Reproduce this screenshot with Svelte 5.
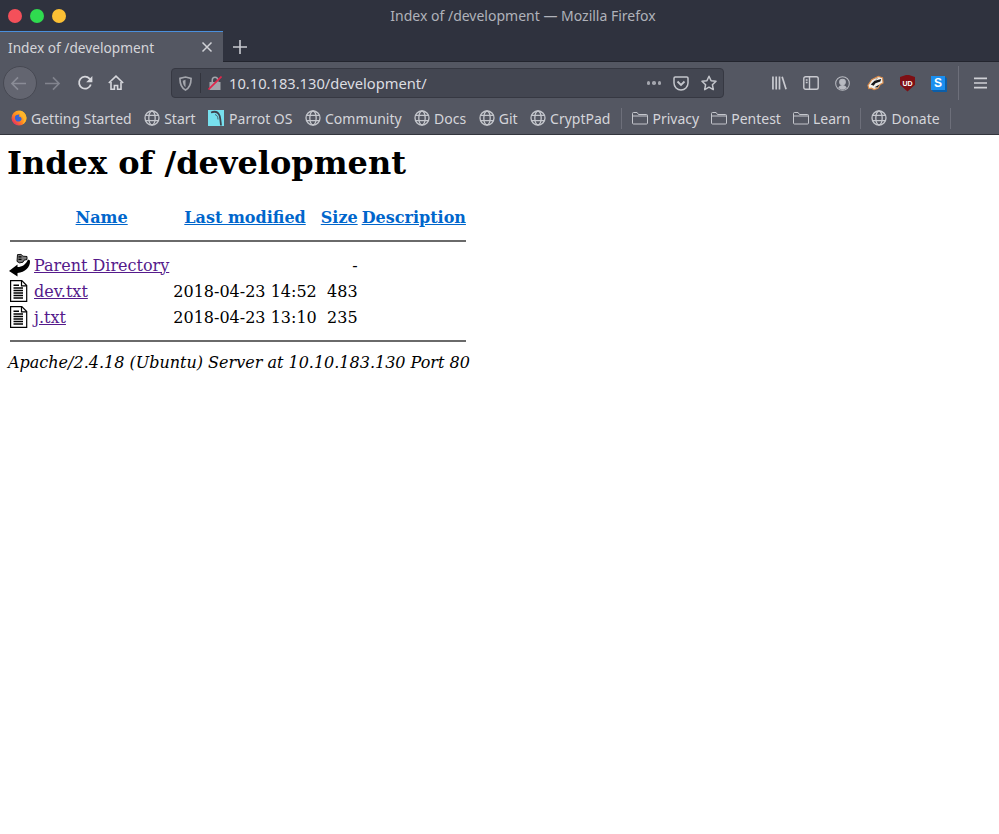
<script>
  const mainBookmarks = [
    { label: 'Start', icon: 'globe' },
    { label: 'Parrot OS', icon: 'parrot' },
    { label: 'Community', icon: 'globe' },
    { label: 'Docs', icon: 'globe' },
    { label: 'Git', icon: 'globe' },
    { label: 'CryptPad', icon: 'globe' }
  ];
  const folders = ['Privacy', 'Pentest', 'Learn'];
  const files = [
    { name: 'dev.txt', date: '2018-04-23 14:52', size: '483' },
    { name: 'j.txt', date: '2018-04-23 13:10', size: '235' }
  ];
</script>

{#snippet globe()}
  <svg class="bm-icon" viewBox="0 0 16 16" fill="none" stroke="#c4c6cc" stroke-width="1.3">
    <circle cx="8" cy="8" r="7" />
    <ellipse cx="8" cy="8" rx="3.2" ry="7" />
    <path d="M1.4 5.4h13.2M1.4 10.6h13.2" />
  </svg>
{/snippet}

{#snippet folder()}
  <svg class="bm-icon" viewBox="0 0 16 16" fill="none" stroke="#c4c6cc" stroke-width="1">
    <path d="M.5 13V3.5a1 1 0 0 1 1-1h3.6l1.4 2h8a1 1 0 0 1 1 1V13a1 1 0 0 1-1 1h-13a1 1 0 0 1-1-1zM.5 6h15" />
  </svg>
{/snippet}

{#snippet fileIcon()}
  <svg class="idx-icon" viewBox="0 0 20 22" fill="none" stroke="#000" stroke-width="1.2">
    <path fill="#fff" d="M.6.6h11.2l4.900 4.900v15.900H.6z" />
    <path d="M11.500 1v4.800h5" />
    <path stroke-width="1.400" d="M3.500 5.200h5.500M3.500 8h9.500M3.500 10.500h9.500M3.500 13h9.500M3.500 15.500h9.500M3.500 18h9.500" />
  </svg>
{/snippet}

<div class="browser">
  <header class="titlebar">
    <div class="lights">
      <span class="light red"></span>
      <span class="light green"></span>
      <span class="light yellow"></span>
    </div>
    <div class="wintitle">Index of /development — Mozilla Firefox</div>
  </header>

  <div class="tabbar">
    <div class="tab">
      <span class="tab-label">Index of /development</span>
      <svg class="tab-close" viewBox="0 0 12 12" stroke="#d0d1d6" stroke-width="1.5"><path d="M1.5 1.5l9 9M10.5 1.5l-9 9" /></svg>
    </div>
    <svg class="newtab" viewBox="0 0 14 14" stroke="#c9cad0" stroke-width="1.6"><path d="M7 0v14M0 7h14" /></svg>
  </div>

  <div class="navbar">
    <div class="back">
      <svg viewBox="0 0 18 16" fill="none" stroke="#8a8c96" stroke-width="1.7"><path d="M17 8H2M8.500 1.500 2 8l6.500 6.500" /></svg>
    </div>
    <svg class="nav-icon fwd" viewBox="0 0 18 16" fill="none" stroke="#82848e" stroke-width="1.7"><path d="M1 8h15M9.500 1.500 16 8l-6.500 6.500" /></svg>
    <svg class="nav-icon reload" viewBox="0 0 16 16" fill="none" stroke="#d6d7dc" stroke-width="1.8"><path d="M13.800 9.500A6 6 0 1 1 12.500 3.600L14 5" /><path fill="#d6d7dc" stroke="none" d="M15.400 1v6.200H9.200z" /></svg>
    <svg class="nav-icon home" viewBox="0 0 16 16" fill="none" stroke="#d6d7dc" stroke-width="1.6"><path d="M.8 8 8 1.200 15.200 8" /><path d="M3 7v7.200h3.400V10.500h3.200v3.700H13V7" /></svg>

    <div class="urlbar">
      <svg class="shield" viewBox="0 0 14 16" fill="none" stroke="#a3a5ac" stroke-width="1.8"><path d="M1 2.500 7 1l6 1.500c0 6-1.500 10-6 12.500C2.500 12.500 1 8.500 1 2.500z" /><path fill="#a3a5ac" stroke="none" d="M7 4v8c-2-1.500-2.800-4-3-7z" /></svg>
      <span class="url-sep"></span>
      <svg class="lock" viewBox="0 0 14 14"><path fill="#a3a5ac" d="M1.500 6h11v8h-11zM3.500 6V4a3.500 3.500 0 0 1 7 0v2H9V4a2 2 0 0 0-4 0v2z" /><path stroke="#e0264b" stroke-width="1.700" d="M13.500.5.500 13.500" /></svg>
      <span class="url">10.10.183.130/development/</span>
      <span class="dots"><i></i><i></i><i></i></span>
      <svg class="pocket" viewBox="0 0 16 15" fill="none" stroke="#c4c6cc" stroke-width="1.5"><path d="M1 2.200A1.200 1.200 0 0 1 2.200 1h11.600A1.200 1.200 0 0 1 15 2.200V7a7 7 0 0 1-14 0z" /><path stroke-width="1.800" d="M4.500 5.500 8 9l3.500-3.500" /></svg>
      <svg class="star" viewBox="0 0 16 16" fill="none" stroke="#c4c6cc" stroke-width="1.500" stroke-linejoin="round"><path d="M8 1.200l2.100 4.500 4.900.6-3.600 3.400.9 4.900L8 12.200l-4.300 2.400.9-4.900L1 6.300l4.900-.6z" /></svg>
    </div>

    <div class="tools">
      <svg class="tool library" viewBox="0 0 16 14" stroke="#c9cad0" stroke-width="1.800" fill="none"><path d="M1 0v14M4.500 0v14M8 0v14M10.800.3l4.200 13.400" /></svg>
      <svg class="tool sidebar" viewBox="0 0 16 14" fill="none" stroke="#c9cad0" stroke-width="1.400"><rect x=".8" y=".8" width="14.400" height="12.400" rx="1.800" /><path d="M6.500 1v12M2.800 4h1.800M2.800 6.500h1.800" /></svg>
      <svg class="tool account" viewBox="0 0 16 16" fill="none" stroke="#b8bac1" stroke-width="1.100"><circle cx="8" cy="8" r="7.300" /><circle cx="8" cy="6.500" r="3" fill="#b8bac1" /><path fill="#b8bac1" stroke="none" d="M3.500 12.500c1-2.200 2.500-3 4.500-3s3.500.8 4.500 3C11.500 13.800 9.800 14.400 8 14.400s-3.500-.6-4.500-1.900z" /></svg>
      <svg class="tool badger" viewBox="0 0 18 16">
        <path fill="#f2f0ea" stroke="#d98b4a" stroke-width="1.200" d="M1 10.500 5 4.500 12 1l4.500 1.500L17 8l-3 1.500-2.500 4-4 1.500-3-1.500-2.500.5z" />
        <path fill="#17171a" d="M4 9.500 8 5.500l7-1.800-.8 2.800L9 8.200l-2 2.800zM8 12.500l5.200-3-2 3.200z" />
        <path fill="#9a9a9a" d="M8.500 3.800l3.500-1.300-1.800 2z" />
      </svg>
      <span class="ublock"><span>UD</span></span>
      <span class="stylus">S</span>
      <span class="tool-sep"></span>
      <svg class="tool menu" viewBox="0 0 14 12" stroke="#d0d1d6" stroke-width="1.800"><path d="M0 1h14M0 6h14M0 11h14" /></svg>
    </div>
  </div>

  <nav class="bookmarks">
    <div class="bm-group main-group">
      <span class="bm">
        <svg class="bm-icon" viewBox="0 0 16 16">
          <defs>
            <linearGradient id="fx" x1="0.9" y1="0.1" x2="0.1" y2="0.9">
              <stop offset="0" stop-color="#ffc52e" />
              <stop offset="0.55" stop-color="#ff8a1e" />
              <stop offset="1" stop-color="#e5246a" />
            </linearGradient>
          </defs>
          <circle cx="8" cy="8" r="7.500" fill="url(#fx)" />
          <path fill="#ffb52a" d="M9 .8c3.500.6 6.200 3.500 6.400 7 .2 3-1.500 5.500-4 6.800 1.800-2 2-5 .5-7-.8-1.200-2-1.800-2.900-2.400z" />
          <path fill="#3563d8" d="M4 6.500c1-1.500 3-2.200 4.500-1.800l-.8 1.800c1.700 0 2.900 1.100 2.900 2.500s-1.400 2.600-3.300 2.600C5 11.600 3.500 9.200 4 6.500z" />
        </svg>
        Getting Started
      </span>
      {#each mainBookmarks as b}
        <span class="bm" class:parrot={b.icon === 'parrot'}>
          {#if b.icon === 'globe'}
            {@render globe()}
          {:else}
            <svg class="bm-icon" viewBox="0 0 16 16"><rect width="16" height="16" fill="#77e0ee" /><path fill="none" stroke="#3d4450" stroke-width="1.800" d="M3 2.500c4-1.500 7-.5 8.500 3 .8 2 1 5.500 1.500 10" /><path fill="none" stroke="#3d4450" stroke-width=".8" d="M7 4.500c2 .5 3 2.500 3 5" /></svg>
          {/if}
          {b.label}
        </span>
      {/each}
    </div>
    <span class="bm-sep first"></span>
    <div class="bm-group">
      {#each folders as f}
        <span class="bm">{@render folder()}{f}</span>
      {/each}
    </div>
    <span class="bm-sep"></span>
    <span class="bm">{@render globe()}Donate</span>
    <span class="bm-sep"></span>
  </nav>

  <main class="page">
    <h1>Index of /development</h1>
    <table>
      <tbody>
        <tr class="head">
          <th class="icol"></th>
          <th><a href="#n">Name</a></th>
          <th><a href="#m">Last modified</a></th>
          <th><a href="#s">Size</a></th>
          <th><a href="#d">Description</a></th>
        </tr>
        <tr><th colspan="5"><hr /></th></tr>
        <tr>
          <td class="icol">
            <svg class="idx-icon" viewBox="0 0 20 22">
              <path fill="#7a7a7a" stroke="#000" stroke-width=".9" d="M7.500.6 11 .4l2 1.800 4 .3v3l-3 .7-1 2-3.500.7-2.500-1.500z" />
              <path stroke="#000" stroke-width="1.200" d="M8.500 2.800h3M8.500 5.300h3" />
              <path fill="#000" d="M-1 17 7.500 10.500v2.500C12 13 16 10.500 18 5.500L20 6.500C20.500 13 15 18.500 7.500 19V22.500z" />
            </svg>
          </td>
          <td><a class="seen" href="#p">Parent Directory</a></td>
          <td></td>
          <td class="num">-</td>
          <td></td>
        </tr>
        {#each files as f}
          <tr>
            <td class="icol">{@render fileIcon()}</td>
            <td><a class="seen" href="#f">{f.name}</a></td>
            <td class="num">{f.date}</td>
            <td class="num">{f.size}</td>
            <td></td>
          </tr>
        {/each}
        <tr><th colspan="5"><hr /></th></tr>
      </tbody>
    </table>
    <address>Apache/2.4.18 (Ubuntu) Server at 10.10.183.130 Port 80</address>
  </main>
</div>

<style>
  :global(body) {
    margin: 0;
    background: #fff;
  }
  .browser {
    width: 999px;
    min-height: 834px;
    background: #fff;
    display: flex;
    flex-direction: column;
  }
  .titlebar {
    height: 31px;
    background: #2f323e;
    display: flex;
    align-items: center;
    font-family: "Noto Sans", sans-serif;
  }
  .lights {
    display: flex;
    gap: 8px;
    padding-left: 8px;
  }
  .light {
    width: 14px;
    height: 14px;
    border-radius: 50%;
  }
  .red { background: #f4505a; }
  .green { background: #2fdb4f; }
  .yellow { background: #fcc034; }
  .wintitle {
    flex: 1;
    text-align: center;
    padding-right: 19px;
    color: #b0b2ba;
    font-size: 14px;
    margin-top: -1px;
  }
  .tabbar {
    height: 31px;
    background: #2f323e;
    display: flex;
    align-items: center;
    font-family: "Noto Sans", sans-serif;
    box-shadow: inset 0 -1px 0 #23252e;
  }
  .tab {
    width: 223px;
    height: 31px;
    box-sizing: border-box;
    border-top: 1.5px solid #4a8fdc;
    background: #545762;
    display: flex;
    align-items: center;
    justify-content: space-between;
    padding: 0 10px 0 8px;
    color: #d4d5da;
    font-size: 13.7px;
  }
  .tab-close {
    width: 12px;
    height: 12px;
  }
  .newtab {
    width: 14px;
    height: 14px;
    margin-left: 10px;
  }
  .navbar {
    height: 42px;
    background: #545762;
    display: flex;
    align-items: center;
    box-sizing: border-box;
  }
  .back {
    width: 32px;
    height: 32px;
    margin-left: 3px;
    border-radius: 50%;
    background: #636570;
    border: 1px solid #474953;
    display: flex;
    align-items: center;
    justify-content: center;
    flex: none;
  }
  .back svg {
    width: 17px;
    height: 15px;
    margin-left: -3px;
  }
  .nav-icon { flex: none; }
  .fwd {
    width: 17px;
    height: 15px;
    margin-left: 7px;
  }
  .reload {
    width: 16px;
    height: 16px;
    margin-left: 16px;
  }
  .home {
    width: 16px;
    height: 16px;
    margin-left: 15px;
  }
  .urlbar {
    margin-left: 47px;
    width: 553px;
    height: 30px;
    box-sizing: border-box;
    background: #434651;
    border: 1px solid #363842;
    border-radius: 4px;
    display: flex;
    align-items: center;
    font-family: "Noto Sans", sans-serif;
    flex: none;
  }
  .shield {
    width: 13px;
    height: 15px;
    margin-left: 7px;
    flex: none;
  }
  .url-sep {
    width: 1px;
    height: 20px;
    background: #32343d;
    margin-left: 8px;
  }
  .lock {
    width: 14px;
    height: 14px;
    margin-left: 7px;
    flex: none;
  }
  .url {
    margin-left: 7px;
    color: #dcdde1;
    font-size: 14.7px;
    flex: 1;
  }
  .dots {
    display: flex;
    gap: 2px;
    margin-right: 12px;
  }
  .dots i {
    width: 3.500px;
    height: 3.500px;
    border-radius: 50%;
    background: #a4a6ae;
  }
  .pocket {
    width: 16px;
    height: 15px;
    margin-right: 12px;
    flex: none;
  }
  .star {
    width: 16px;
    height: 16px;
    margin-right: 6px;
    flex: none;
  }
  .tools {
    margin-left: 48px;
    display: flex;
    align-items: center;
    height: 100%;
  }
  .tool { flex: none; }
  .library { width: 15px; height: 14px; }
  .sidebar { width: 16px; height: 14px; margin-left: 16px; }
  .account { width: 15px; height: 15px; margin-left: 16px; }
  .badger { width: 17px; height: 16px; margin-left: 17px; }
  .ublock {
    width: 15px;
    height: 17px;
    margin-left: 16px;
    background: #7e0f14;
    clip-path: polygon(50% 0, 100% 15%, 100% 60%, 50% 100%, 0 60%, 0 15%);
    color: #fff;
    font: 700 7px "Liberation Sans", sans-serif;
    display: flex;
    align-items: center;
    justify-content: center;
  }
  .stylus {
    width: 14px;
    height: 14px;
    margin-left: 16px;
    background: #1b8ff0;
    box-shadow: 1px 1px 0 #0c5ea8, 2px 2px 0 #0c5ea8;
    color: #fff;
    font: 700 12px/14px "Liberation Sans", sans-serif;
    text-align: center;
  }
  .tool-sep {
    width: 1px;
    height: 34px;
    background: #6d6f7a;
    margin-left: 13px;
  }
  .menu { width: 13px; height: 12px; margin-left: 15px; }

  .bookmarks {
    height: 31px;
    box-sizing: border-box;
    background: #545762;
    border-bottom: 1px solid #33353d;
    display: flex;
    align-items: center;
    padding: 0 0 2px 11px;
    font-family: "Noto Sans", sans-serif;
    font-size: 14px;
    color: #d4d5da;
  }
  .bm-group {
    display: flex;
    align-items: center;
    gap: 12px;
  }
  .main-group { gap: 12.500px; }
  .bm {
    display: flex;
    align-items: center;
    gap: 4px;
    white-space: nowrap;
  }
  .bm.parrot { gap: 5px; }
  .bm-icon {
    width: 16px;
    height: 16px;
    flex: none;
  }
  .bm-sep {
    width: 1px;
    height: 21px;
    background: #6d6f7a;
    margin: 0 10px;
  }
  .bm-sep.first { margin-left: 11px; }

  .page {
    padding: 0 8px 0 7px;
    font-family: "DejaVu Serif", serif;
    font-size: 16px;
    color: #000;
  }
  h1 {
    font-size: 32px;
    font-weight: 700;
    margin: 10px 0 23px;
    line-height: 37px;
  }
  table {
    border-spacing: 2px;
    border-collapse: separate;
  }
  th, td {
    padding: 1px;
  }
  .head th {
    padding-bottom: 2px;
  }
  .icol {
    width: 20px;
    line-height: 0;
  }
  td {
    height: 22px;
  }
  .num { text-align: right; }
  a {
    color: #0066cc;
  }
  a.seen {
    color: #551a8b;
  }
  hr {
    border: none;
    height: 2px;
    background: #6a6a6a;
    margin: 8px 0;
  }
  .idx-icon {
    width: 20px;
    height: 22px;
    display: block;
    overflow: visible;
  }
  address {
    margin-left: 1px;
    font-style: italic;
    white-space: nowrap;
  }
</style>
